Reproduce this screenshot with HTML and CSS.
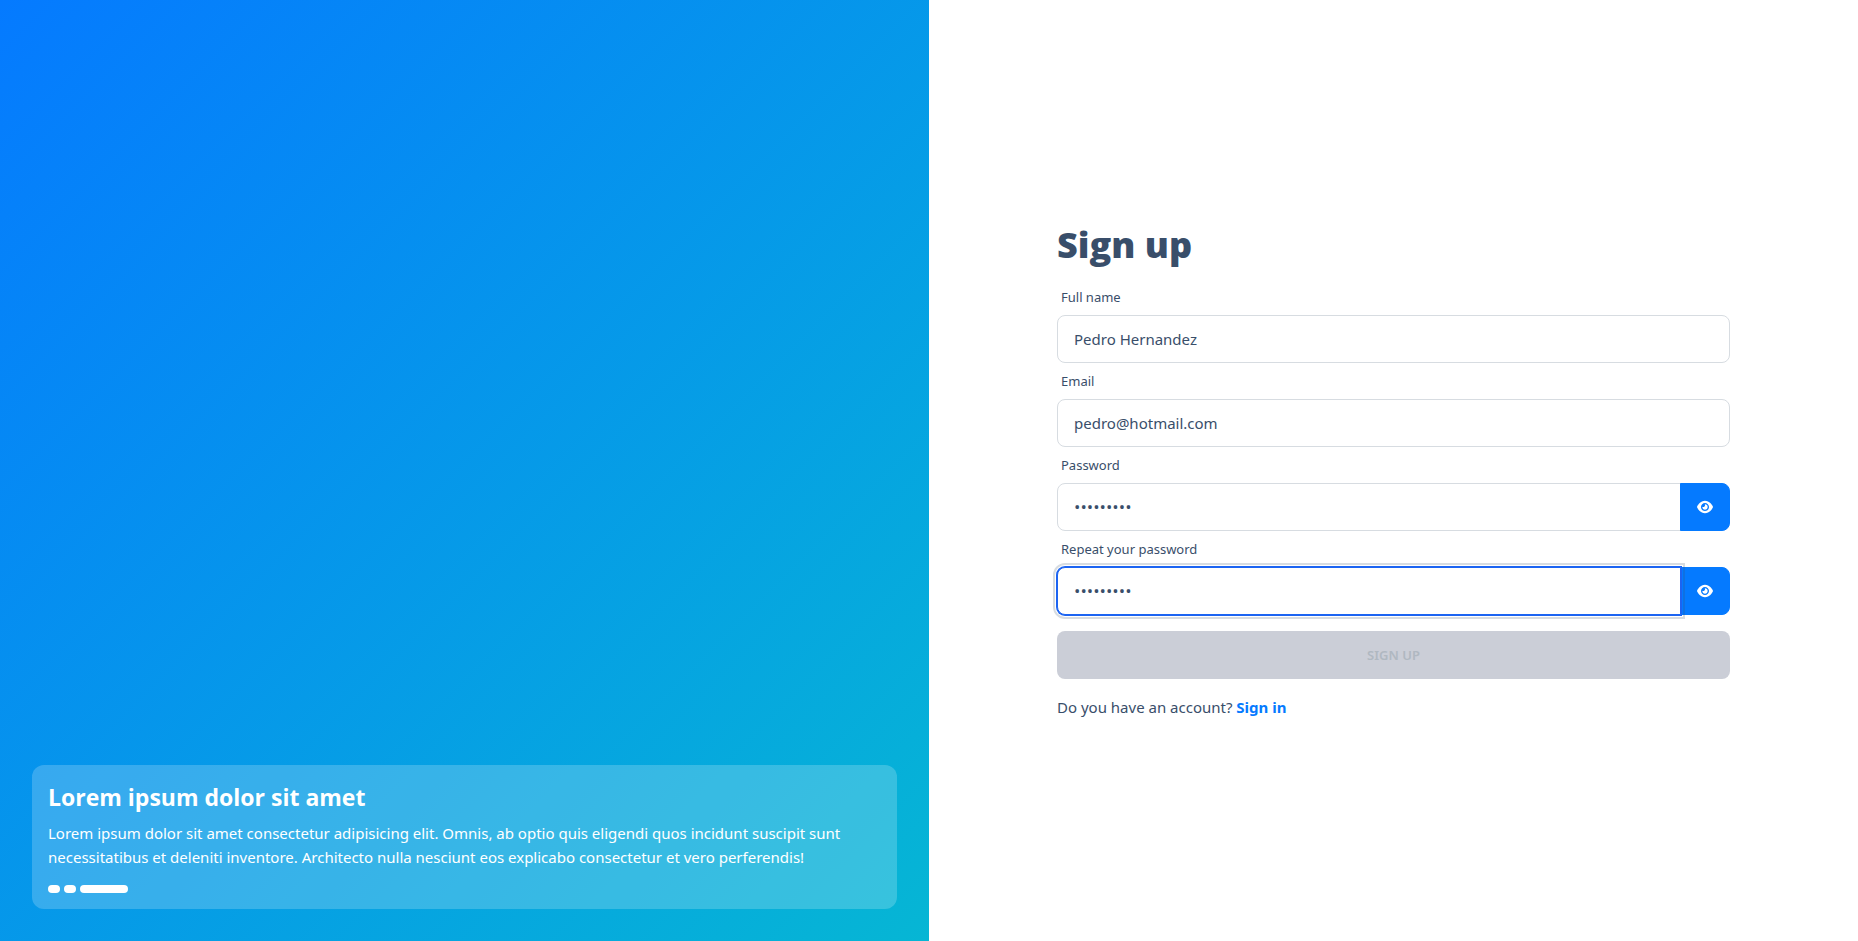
FILE: index.html
```html
<!DOCTYPE html>
<html lang="en">
<head>
<meta charset="utf-8">
<meta name="viewport" content="width=device-width, initial-scale=1">
<title>Sign up</title>
<link rel="stylesheet" href="styles.css">
</head>
<body>
<svg class="sprite" aria-hidden="true">
  <symbol id="eye" viewBox="0 0 576 512">
    <path d="M279.600 160.400C282.400 160.100 285.200 160 288 160C341 160 384 202.100 384 256C384 309 341 352 288 352C234.100 352 192 309 192 256C192 253.200 192.100 250.400 192.400 247.600C201.700 252.500 212.500 256 224 256C259.300 256 288 227.300 288 192C288 180.500 284.500 169.700 279.600 160.400zM480.600 112.600C527.400 156 558.700 207.100 573.500 243.700C576.800 251.600 576.800 260.400 573.500 268.300C558.700 304 527.400 355.100 480.600 399.400C433.500 443.200 368.800 480 288 480C207.200 480 142.500 443.200 95.420 399.400C48.620 355.100 17.340 304 2.461 268.300C-.8205 260.400-.8205 251.600 2.461 243.700C17.340 207.100 48.620 156 95.420 112.600C142.500 68.840 207.200 32 288 32C368.800 32 433.500 68.840 480.600 112.600zM288 112C208.500 112 144 176.500 144 256C144 335.500 208.500 400 288 400C367.500 400 432 335.500 432 256C432 176.500 367.500 112 288 112z"/>
  </symbol>
</svg>
<main class="page">
  <section class="hero">
    <div class="card">
      <h2 class="card-title">Lorem ipsum dolor sit amet</h2>
      <p class="card-text">Lorem ipsum dolor sit amet consectetur adipisicing elit. Omnis, ab optio quis eligendi quos incidunt suscipit sunt necessitatibus et deleniti inventore. Architecto nulla nesciunt eos explicabo consectetur et vero perferendis!</p>
      <div class="dots">
        <span class="dot"></span>
        <span class="dot"></span>
        <span class="dot dot-active"></span>
      </div>
    </div>
  </section>
  <section class="panel">
    <h1 class="title">Sign up</h1>
    <form class="form">
      <div class="field">
        <label class="label" for="name">Full name</label>
        <input class="input" id="name" type="text" value="Pedro Hernandez">
      </div>
      <div class="field">
        <label class="label" for="email">Email</label>
        <input class="input" id="email" type="email" value="pedro@hotmail.com">
      </div>
      <div class="field">
        <label class="label" for="password">Password</label>
        <div class="join">
          <input class="input" id="password" type="password" value="pedro1234">
          <button class="reveal" type="button" aria-label="Show password"><svg class="icon" aria-hidden="true"><use href="#eye"/></svg></button>
        </div>
      </div>
      <div class="field">
        <label class="label" for="repeat">Repeat your password</label>
        <div class="join">
          <input class="input input-active" id="repeat" type="password" value="pedro1234">
          <button class="reveal" type="button" aria-label="Show repeated password"><svg class="icon" aria-hidden="true"><use href="#eye"/></svg></button>
        </div>
      </div>
      <button class="submit" type="submit" disabled>Sign up</button>
    </form>
    <p class="note">Do you have an account? <a class="link" href="#signin">Sign in</a></p>
  </section>
</main>
</body>
</html>
```
FILE: styles.css
```css
*, *::before, *::after { box-sizing: border-box; }

body {
  margin: 0;
  background: #fff;
  color: #394e6a;
  font: 15px/24px "Segoe UI", "Noto Sans", "Open Sans", sans-serif;
}

h1, h2, p { margin: 0; }

.sprite { position: absolute; width: 0; height: 0; }

.page {
  display: grid;
  grid-template-columns: 1fr 1fr;
  min-height: 100vh;
}

.hero {
  display: flex;
  align-items: flex-end;
  padding: 32px;
  background: linear-gradient(to bottom right, #057aff, #06b6d4);
}

.card {
  flex: 1;
  padding: 16px;
  border-radius: 12px;
  background: rgb(255 255 255 / 20%);
  color: #fff;
}

.card-title {
  margin-bottom: 8px;
  font-family: "Segoe UI", "Open Sans", sans-serif;
  font-size: 23px;
  line-height: 32px;
  font-weight: 700;
}

.dots { display: flex; gap: 4px; margin-top: 16px; }
.dot { width: 12px; height: 8px; border-radius: 4px; background: #fff; }
.dot-active { width: 48px; }

.panel {
  display: flex;
  flex-direction: column;
  justify-content: center;
  gap: 16px;
  padding: 0 128px;
}

.title {
  padding-top: 4px;
  font-family: "Segoe UI", "Open Sans", sans-serif;
  font-size: 36px;
  line-height: 36px;
  font-weight: 800;
}

.form { display: flex; flex-direction: column; }

.label {
  display: block;
  padding: 8px 4px;
  font-size: 13px;
  line-height: 20px;
}

.input {
  display: block;
  width: 100%;
  height: 48px;
  padding: 0 16px;
  border: 1px solid #d7dce1;
  border-radius: 8px;
  background: #fff;
  color: inherit;
  font: inherit;
}

.join { display: flex; }
.join .input {
  position: relative;
  flex: 1;
  min-width: 0;
  border-radius: 8px 0 0 8px;
  font-family: "Segoe UI", "Open Sans", sans-serif;
  font-size: 17px;
}

.input-active {
  z-index: 1;
  border-color: #1c64f2;
  box-shadow: 0 0 0 1px #1c64f2;
  outline: 2px solid rgb(57 78 106 / 20%);
  outline-offset: 2px;
}

.reveal {
  position: relative;
  display: flex;
  align-items: center;
  height: 48px;
  margin-left: -1px;
  padding: 0 16px;
  border: 1px solid #057aff;
  border-radius: 0 8px 8px 0;
  background: #057aff;
  color: #fff;
}

.icon { width: 16px; height: 16px; fill: currentColor; }

.submit {
  height: 48px;
  margin-top: 16px;
  border: 0;
  border-radius: 8px;
  background: #cbced7;
  color: #b0b8c1;
  font: inherit;
  font-size: 13px;
  font-weight: 600;
  text-transform: uppercase;
}

.link { color: #057aff; font-weight: 700; text-decoration: none; }
```
